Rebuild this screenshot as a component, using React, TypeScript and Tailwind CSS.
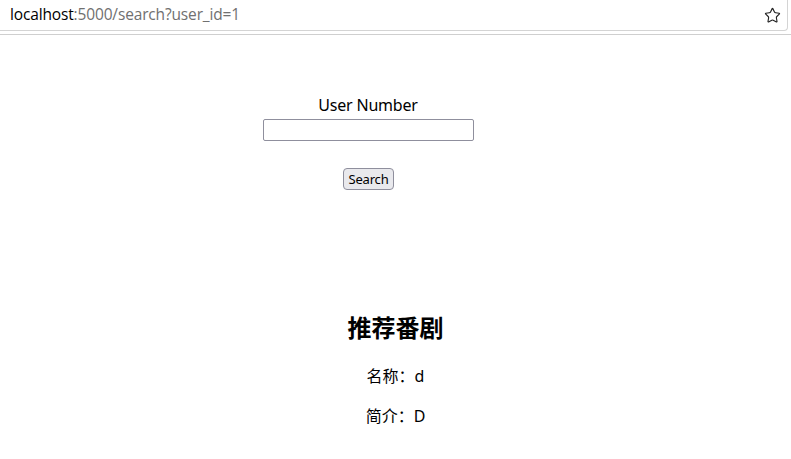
import { Star } from "lucide-react";

export default function App() {
  return (
    <div className="h-[459px] w-[791px] overflow-hidden bg-white font-['Noto_Sans','Noto_Sans_CJK_SC',sans-serif] text-black">
      {/* browser bar */}
      <div className="h-[35px] border-b border-[#cfcfcf] bg-white">
        <div className="flex h-[31px] w-[788px] items-center justify-between rounded-br-[4px] border-r border-b border-[#d4d4d4] pl-[10px] pr-[6px]">
          <span className="text-[15.5px] leading-none font-['Open_Sans',sans-serif] tracking-[-0.15px]">
            localhost<span className="text-[#707070]">:5000/search?user_id=1</span>
          </span>
          <Star size={17} strokeWidth={1.6} className="text-[#222]" />
        </div>
      </div>

      {/* search form */}
      <div className="flex w-[736px] flex-col items-center pt-[58px]">
        <label className="text-[16px] leading-[24px] tracking-[-0.2px]">User Number</label>
        <input
          type="text"
          className="mt-[2px] h-[22px] w-[211px] rounded-[2px] border border-[#8f8f9d] bg-white"
        />
        <button className="mt-[27px] ml-[1px] h-[22px] rounded-[4px] border border-[#8f8f9d] bg-[#e9e9ed] px-[5px] text-[13px] leading-none tracking-[-0.2px]">
          Search
        </button>
      </div>

      {/* results */}
      <div className="mt-[120px] flex flex-col items-center">
        <h2 className="text-[24px] leading-[36px] font-bold">推荐番剧</h2>
        <p className="mt-[18px] text-[16px] leading-[24px]">名称：d</p>
        <p className="mt-[16px] text-[16px] leading-[24px]">简介：D</p>
      </div>
    </div>
  );
}
